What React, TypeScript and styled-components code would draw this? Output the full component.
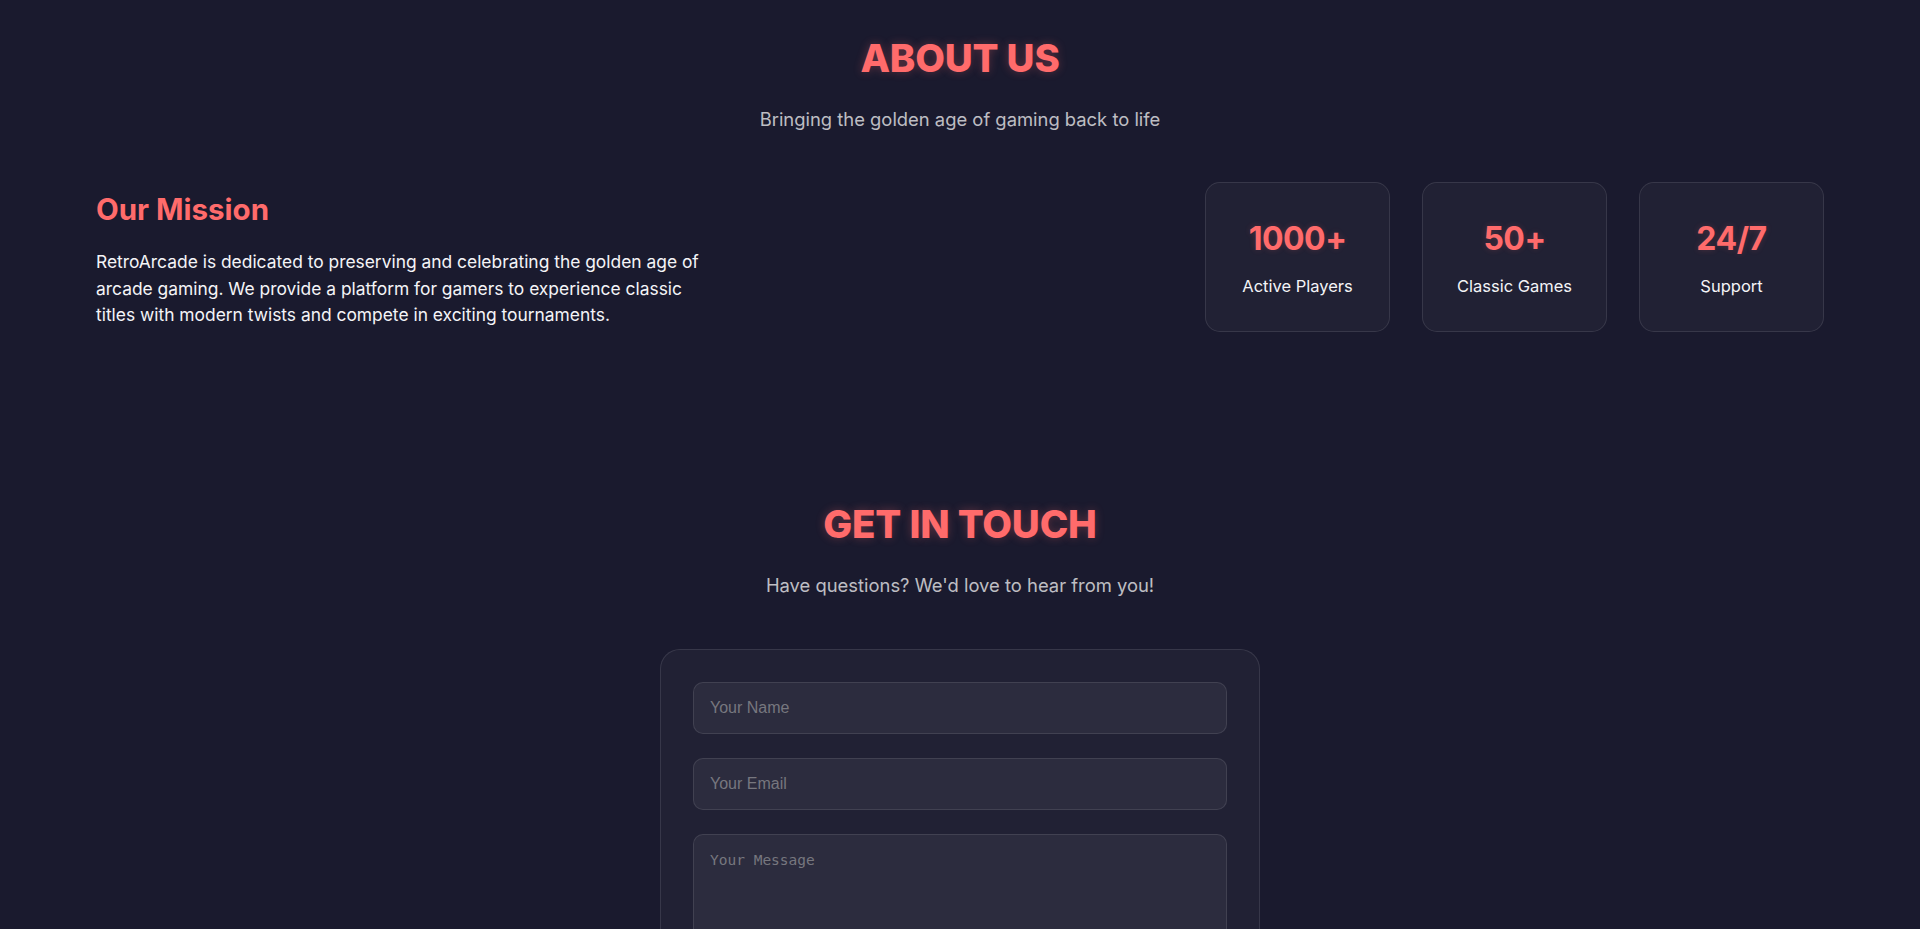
import React from "react";
import styled, { createGlobalStyle } from "styled-components";

const GlobalStyle = createGlobalStyle`
  * { box-sizing: border-box; }
  html, body { margin: 0; padding: 0; }
  body {
    background: #1a1a2e;
    color: #ffffff;
    font-family: "Inter", "Open Sans", sans-serif;
  }
`;

const Page = styled.main`
  display: flex;
  flex-direction: column;
  min-height: 100vh;
`;

const Section = styled.section<{ $top: number; $bottom: number }>`
  padding: ${(p) => p.$top}px 5% ${(p) => p.$bottom}px;
  display: flex;
  flex-direction: column;
`;

const SectionTitle = styled.h2`
  margin: 0 0 24px;
  text-align: center;
  font-size: 38.5px;
  line-height: 48px;
  font-weight: 800;
  color: #ff6b6b;
  letter-spacing: -0.2px;
  text-shadow: 0 0 10px rgba(255, 107, 107, 0.3);
`;

const SectionSubtitle = styled.p`
  margin: 0 0 50px;
  text-align: center;
  font-size: 18.4px;
  line-height: 26.4px;
  color: rgba(255, 255, 255, 0.72);
`;

const AboutContent = styled.div`
  display: flex;
  justify-content: space-between;
  align-items: flex-start;
`;

const MissionText = styled.div`
  max-width: 625px;
  padding-top: 9px;
`;

const MissionTitle = styled.h3`
  margin: 0 0 22px;
  font-size: 29.5px;
  line-height: 36px;
  font-weight: 700;
  color: #ff6b6b;
`;

const MissionBody = styled.p`
  margin: 0;
  font-size: 17.4px;
  line-height: 26.5px;
  color: #f4f4f7;
`;

const StatsGrid = styled.div`
  display: grid;
  grid-template-columns: repeat(3, 185px);
  gap: 32px;
`;

const StatCard = styled.div`
  height: 150px;
  padding: 32px 16px;
  border-radius: 15px;
  background: rgba(255, 255, 255, 0.03);
  border: 1px solid rgba(255, 255, 255, 0.1);
  display: flex;
  flex-direction: column;
  align-items: center;
`;

const StatNumber = styled.div`
  font-size: 32px;
  line-height: 48px;
  font-weight: 700;
  color: #ff6b6b;
  letter-spacing: -0.5px;
  text-shadow: 0 0 6px rgba(255, 107, 107, 0.2);
`;

const StatLabel = styled.div`
  margin-top: 11px;
  font-size: 16.5px;
  line-height: 24px;
  color: #f4f4f7;
`;

const ContactForm = styled.form`
  width: 600px;
  margin: 0 auto;
  padding: 32px;
  border-radius: 20px;
  background: rgba(255, 255, 255, 0.03);
  border: 1px solid rgba(255, 255, 255, 0.1);
  display: flex;
  flex-direction: column;
  gap: 24px;
`;

const Field = styled.input`
  width: 100%;
  padding: 16px;
  border-radius: 10px;
  border: 1px solid rgba(255, 255, 255, 0.1);
  background: rgba(255, 255, 255, 0.05);
  color: #ffffff;
  font-family: "Liberation Sans", Arial, sans-serif;
  font-size: 16px;
  outline: none;
  &::placeholder { color: #77777f; }
`;

const MessageField = styled.textarea`
  width: 100%;
  height: 150px;
  padding: 17px 16px 16px;
  border-radius: 10px;
  border: 1px solid rgba(255, 255, 255, 0.1);
  background: rgba(255, 255, 255, 0.05);
  color: #ffffff;
  font-family: "DejaVu Sans Mono", monospace;
  font-size: 14.5px;
  resize: vertical;
  outline: none;
  &::placeholder { color: #77777f; }
`;

const SubmitButton = styled.button`
  padding: 15px 32px;
  border: none;
  border-radius: 10px;
  background: #ff6b6b;
  color: #ffffff;
  font-family: "Inter", sans-serif;
  font-size: 16px;
  font-weight: 700;
  cursor: pointer;
`;

const stats = [
  { value: "1000+", label: "Active Players" },
  { value: "50+", label: "Classic Games" },
  { value: "24/7", label: "Support" },
];

export default function App() {
  return (
    <>
      <GlobalStyle />
      <Page>
        <Section $top={34} $bottom={84}>
          <SectionTitle>ABOUT US</SectionTitle>
          <SectionSubtitle>Bringing the golden age of gaming back to life</SectionSubtitle>
          <AboutContent>
            <MissionText>
              <MissionTitle>Our Mission</MissionTitle>
              <MissionBody>
                RetroArcade is dedicated to preserving and celebrating the golden age of arcade
                gaming. We provide a platform for gamers to experience classic titles with modern
                twists and compete in exciting tournaments.
              </MissionBody>
            </MissionText>
            <StatsGrid>
              {stats.map((s) => (
                <StatCard key={s.label}>
                  <StatNumber>{s.value}</StatNumber>
                  <StatLabel>{s.label}</StatLabel>
                </StatCard>
              ))}
            </StatsGrid>
          </AboutContent>
        </Section>
        <Section $top={84} $bottom={80}>
          <SectionTitle>GET IN TOUCH</SectionTitle>
          <SectionSubtitle>Have questions? We'd love to hear from you!</SectionSubtitle>
          <ContactForm onSubmit={(e) => e.preventDefault()}>
            <Field type="text" placeholder="Your Name" />
            <Field type="email" placeholder="Your Email" />
            <MessageField placeholder="Your Message" />
            <SubmitButton type="submit">Send Message</SubmitButton>
          </ContactForm>
        </Section>
      </Page>
    </>
  );
}
